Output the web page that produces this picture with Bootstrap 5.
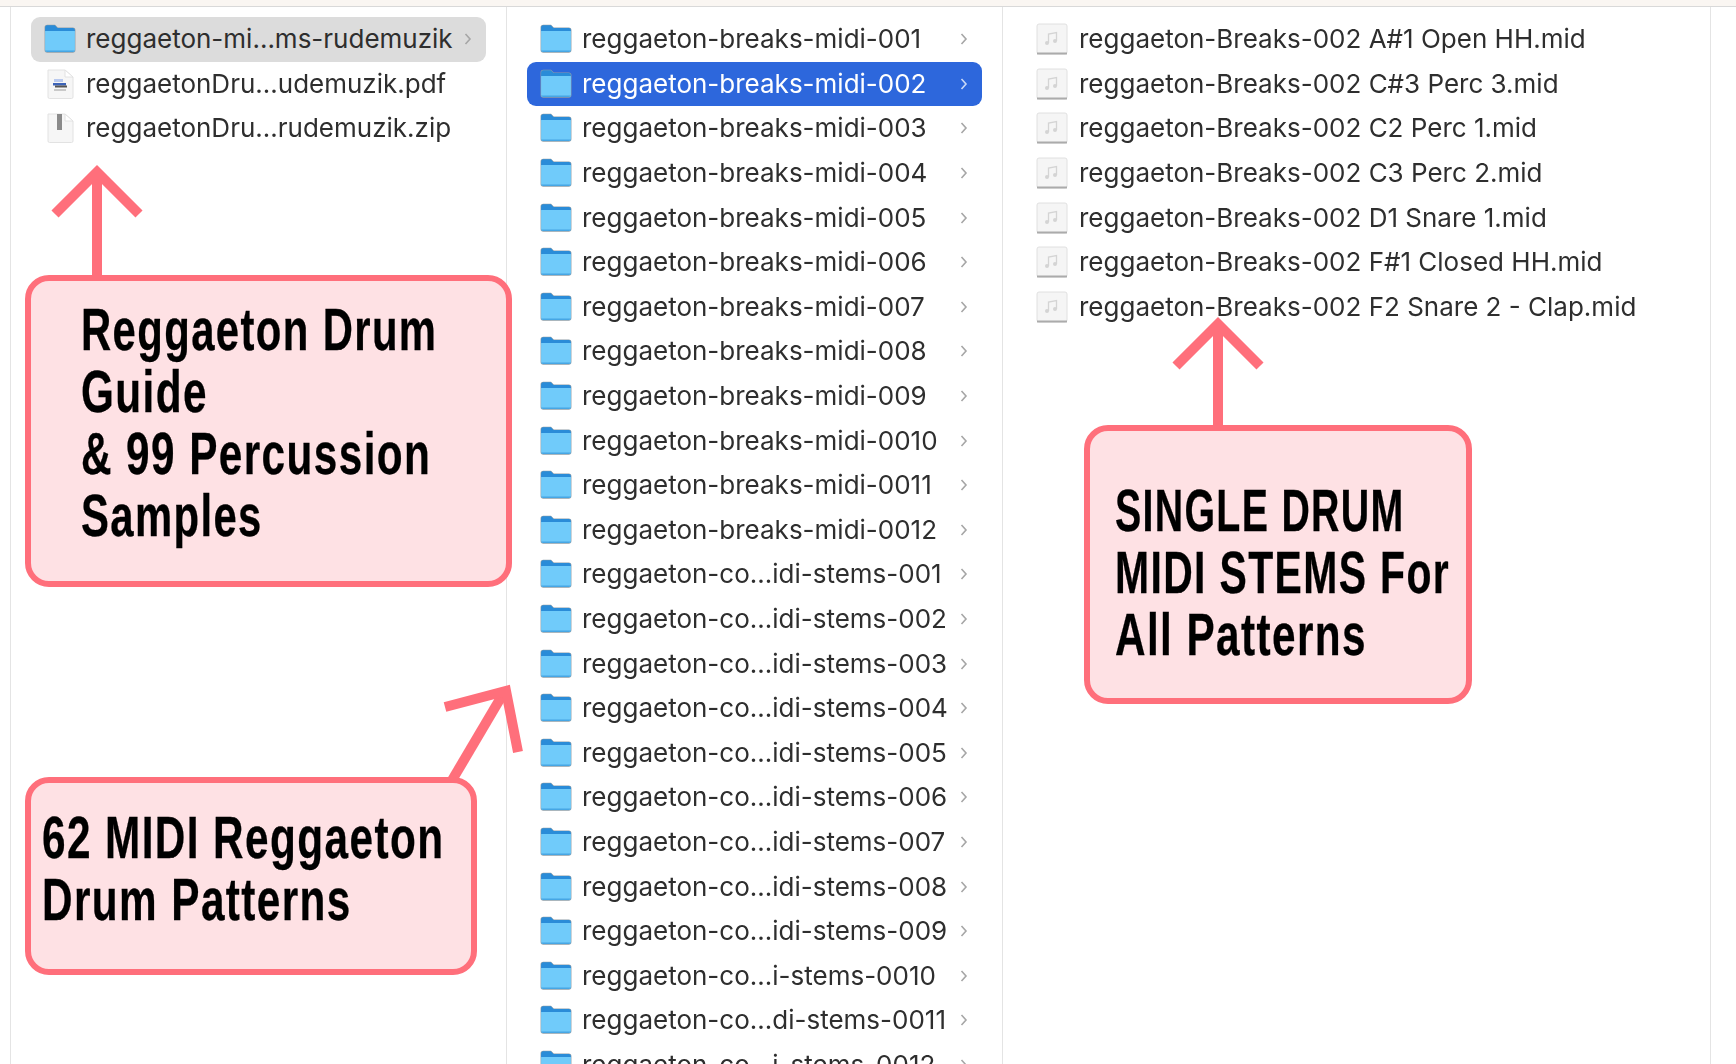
<!DOCTYPE html>
<html lang="en">
<head>
<meta charset="utf-8">
<title>Reggaeton MIDI pack contents</title>
<link href="https://cdn.jsdelivr.net/npm/bootstrap@5.3.0/dist/css/bootstrap.min.css" rel="stylesheet">
<style>
html,body{height:1064px;overflow:hidden;background:#fff}
.topstrip{height:6px;background:#faf6f2;border-bottom:1px solid #d9d9d9;box-sizing:content-box}
.finder{margin-left:10px;width:1701px;height:1057px;overflow:hidden;border-left:1px solid #e4e4e4;border-right:1px solid #e4e4e4;filter:blur(.5px)}
.pane{padding-top:10px;overflow:hidden;height:1057px;flex:none}
.pane-a{width:496px;padding-left:20px;padding-right:20px;border-right:1px solid #e4e4e4}
.pane-b{width:496px;padding-left:20px;padding-right:20px;border-right:1px solid #e4e4e4}
.pane-c{flex:1 1 auto;padding-left:33px}
.fitem{height:44.6px;flex:none;padding-left:13px;padding-right:14px;font:400 26px/1 Inter,"Liberation Sans",sans-serif;color:#2e2e2e;white-space:nowrap;border-radius:9px}
.fitem .ficon{flex:none;width:32px;height:30px;margin-right:10px}
.fitem .chev{flex:none;width:8px;height:14px;margin-left:auto}
.fitem.active-grey{background:#dcdcdc}
.fitem.active-blue{background:#2d67dc;color:#fff}
.pane-c .fitem{padding-left:0;height:44.6px}
.pane-c .fitem .ficon{width:32px;height:32px;margin-right:11px}
.callout{position:absolute;background:#fee1e4;border:6px solid #ff6f7b;border-radius:24px;color:#000;font-family:"Liberation Sans",sans-serif;font-weight:700;font-size:60px;line-height:62px;letter-spacing:2px;white-space:nowrap;-webkit-text-stroke:.3px #000}
.callout span{display:block;transform-origin:left center;transform:scaleX(.705)}
.callout span.narrow-a{transform:scaleX(.697)}
.callout span.narrow-b{transform:scaleX(.682)}
.callout span.narrow-c{transform:scaleX(.655)}
.call-a{left:25px;top:275px;width:487px;height:312px;padding:18px 0 0 50px}
.call-b{left:25px;top:777px;width:452px;height:198px;padding:24px 0 0 11px}
.call-c{left:1084px;top:425px;width:388px;height:279px;padding:49px 0 0 25px}
.arrows{position:absolute;left:0;top:0;pointer-events:none}
</style>
</head>
<body class="position-relative m-0">
<svg width="0" height="0" class="position-absolute">
<defs>
<symbol id="folder" viewBox="1.500 2.500 29 27">
<path d="M2 5.500Q2 3 4.500 3H11.500L14 5.500H27.500Q30 5.500 30 8V26Q30 28.500 27.500 28.500H4.500Q2 28.500 2 26Z" fill="#8f9ea8"/>
<path d="M2.500 6Q2.500 3.500 4.500 3.500H11.300L13.800 6H27.500Q29.500 6 29.500 8V9.500H2.500Z" fill="#2a8cd8"/>
<path d="M2.500 8.800H29.500V25.800Q29.500 27.800 27.500 27.800H4.500Q2.500 27.800 2.500 25.800Z" fill="#70cbfa"/>
<path d="M2.500 26.500H29.500V26.200Q29.500 27.800 27.500 27.800H4.500Q2.500 27.800 2.500 26.200Z" fill="#46a6e4"/>
</symbol>
<symbol id="chevron" viewBox="0 0 8 14"><path d="M1.500 2L6 7L1.500 12" fill="none" stroke="#a6a6a6" stroke-width="1.600"/></symbol>
<symbol id="chevwhite" viewBox="0 0 8 14"><path d="M1.500 2L6 7L1.500 12" fill="none" stroke="#c9d8f6" stroke-width="1.600"/></symbol>
<symbol id="pdfdoc" viewBox="0 0 32 30">
<path d="M4 1H21L29 8V28Q29 29.500 27.500 29.500H5.500Q4 29.500 4 28Z" fill="#f6f6f6" stroke="#e2e2e2"/>
<path d="M21 1V8H29Z" fill="#fff" stroke="#e2e2e2"/>
<rect x="10" y="10" width="9" height="3" fill="#b9c9ee"/><rect x="9" y="14" width="13" height="2.500" fill="#3c63b8"/><rect x="11" y="16.500" width="12" height="2" fill="#555"/><rect x="10" y="20" width="12" height="2" fill="#c9c9c9"/>
</symbol>
<symbol id="zipdoc" viewBox="0 0 32 30">
<path d="M4 1H21L29 8V28Q29 29.500 27.500 29.500H5.500Q4 29.500 4 28Z" fill="#f6f6f6" stroke="#e2e2e2"/>
<path d="M21 1V8H29Z" fill="#fff" stroke="#e2e2e2"/>
<rect x="13" y="1" width="5" height="16" fill="#8a8a8a"/>
</symbol>
<symbol id="midi" viewBox="0 0 32 32">
<rect x="1" y="1" width="30" height="30" rx="2" fill="#f5f5f5" stroke="#e0e0e0"/>
<rect x="1" y="29.500" width="30" height="2" fill="#ababab"/>
<path d="M12.500 20V11L20.500 9.500V18" fill="none" stroke="#d4d4d4" stroke-width="1.300"/>
<circle cx="11" cy="20" r="2" fill="#d4d4d4"/><circle cx="19" cy="18" r="2" fill="#d4d4d4"/>
</symbol>
</defs>
</svg>

<div class="topstrip"></div>
<div class="finder d-flex">
  <div class="pane pane-a d-flex flex-column">
    <div class="fitem active-grey d-flex align-items-center"><svg class="ficon"><use href="#folder"/></svg><span>reggaeton-mi...ms-rudemuzik</span><svg class="chev"><use href="#chevron"/></svg></div>
    <div class="fitem d-flex align-items-center"><svg class="ficon"><use href="#pdfdoc"/></svg><span>reggaetonDru...udemuzik.pdf</span></div>
    <div class="fitem d-flex align-items-center"><svg class="ficon"><use href="#zipdoc"/></svg><span>reggaetonDru...rudemuzik.zip</span></div>
  </div>
  <div class="pane pane-b d-flex flex-column">
    <div class="fitem d-flex align-items-center"><svg class="ficon"><use href="#folder"/></svg><span>reggaeton-breaks-midi-001</span><svg class="chev"><use href="#chevron"/></svg></div>
    <div class="fitem active-blue d-flex align-items-center"><svg class="ficon"><use href="#folder"/></svg><span>reggaeton-breaks-midi-002</span><svg class="chev"><use href="#chevwhite"/></svg></div>
    <div class="fitem d-flex align-items-center"><svg class="ficon"><use href="#folder"/></svg><span>reggaeton-breaks-midi-003</span><svg class="chev"><use href="#chevron"/></svg></div>
    <div class="fitem d-flex align-items-center"><svg class="ficon"><use href="#folder"/></svg><span>reggaeton-breaks-midi-004</span><svg class="chev"><use href="#chevron"/></svg></div>
    <div class="fitem d-flex align-items-center"><svg class="ficon"><use href="#folder"/></svg><span>reggaeton-breaks-midi-005</span><svg class="chev"><use href="#chevron"/></svg></div>
    <div class="fitem d-flex align-items-center"><svg class="ficon"><use href="#folder"/></svg><span>reggaeton-breaks-midi-006</span><svg class="chev"><use href="#chevron"/></svg></div>
    <div class="fitem d-flex align-items-center"><svg class="ficon"><use href="#folder"/></svg><span>reggaeton-breaks-midi-007</span><svg class="chev"><use href="#chevron"/></svg></div>
    <div class="fitem d-flex align-items-center"><svg class="ficon"><use href="#folder"/></svg><span>reggaeton-breaks-midi-008</span><svg class="chev"><use href="#chevron"/></svg></div>
    <div class="fitem d-flex align-items-center"><svg class="ficon"><use href="#folder"/></svg><span>reggaeton-breaks-midi-009</span><svg class="chev"><use href="#chevron"/></svg></div>
    <div class="fitem d-flex align-items-center"><svg class="ficon"><use href="#folder"/></svg><span>reggaeton-breaks-midi-0010</span><svg class="chev"><use href="#chevron"/></svg></div>
    <div class="fitem d-flex align-items-center"><svg class="ficon"><use href="#folder"/></svg><span>reggaeton-breaks-midi-0011</span><svg class="chev"><use href="#chevron"/></svg></div>
    <div class="fitem d-flex align-items-center"><svg class="ficon"><use href="#folder"/></svg><span>reggaeton-breaks-midi-0012</span><svg class="chev"><use href="#chevron"/></svg></div>
    <div class="fitem d-flex align-items-center"><svg class="ficon"><use href="#folder"/></svg><span>reggaeton-co...idi-stems-001</span><svg class="chev"><use href="#chevron"/></svg></div>
    <div class="fitem d-flex align-items-center"><svg class="ficon"><use href="#folder"/></svg><span>reggaeton-co...idi-stems-002</span><svg class="chev"><use href="#chevron"/></svg></div>
    <div class="fitem d-flex align-items-center"><svg class="ficon"><use href="#folder"/></svg><span>reggaeton-co...idi-stems-003</span><svg class="chev"><use href="#chevron"/></svg></div>
    <div class="fitem d-flex align-items-center"><svg class="ficon"><use href="#folder"/></svg><span>reggaeton-co...idi-stems-004</span><svg class="chev"><use href="#chevron"/></svg></div>
    <div class="fitem d-flex align-items-center"><svg class="ficon"><use href="#folder"/></svg><span>reggaeton-co...idi-stems-005</span><svg class="chev"><use href="#chevron"/></svg></div>
    <div class="fitem d-flex align-items-center"><svg class="ficon"><use href="#folder"/></svg><span>reggaeton-co...idi-stems-006</span><svg class="chev"><use href="#chevron"/></svg></div>
    <div class="fitem d-flex align-items-center"><svg class="ficon"><use href="#folder"/></svg><span>reggaeton-co...idi-stems-007</span><svg class="chev"><use href="#chevron"/></svg></div>
    <div class="fitem d-flex align-items-center"><svg class="ficon"><use href="#folder"/></svg><span>reggaeton-co...idi-stems-008</span><svg class="chev"><use href="#chevron"/></svg></div>
    <div class="fitem d-flex align-items-center"><svg class="ficon"><use href="#folder"/></svg><span>reggaeton-co...idi-stems-009</span><svg class="chev"><use href="#chevron"/></svg></div>
    <div class="fitem d-flex align-items-center"><svg class="ficon"><use href="#folder"/></svg><span>reggaeton-co...i-stems-0010</span><svg class="chev"><use href="#chevron"/></svg></div>
    <div class="fitem d-flex align-items-center"><svg class="ficon"><use href="#folder"/></svg><span>reggaeton-co...di-stems-0011</span><svg class="chev"><use href="#chevron"/></svg></div>
    <div class="fitem d-flex align-items-center"><svg class="ficon"><use href="#folder"/></svg><span>reggaeton-co...i-stems-0012</span><svg class="chev"><use href="#chevron"/></svg></div>
  </div>
  <div class="pane pane-c d-flex flex-column">
    <div class="fitem d-flex align-items-center"><svg class="ficon"><use href="#midi"/></svg><span>reggaeton-Breaks-002 A#1 Open HH.mid</span></div>
    <div class="fitem d-flex align-items-center"><svg class="ficon"><use href="#midi"/></svg><span>reggaeton-Breaks-002 C#3 Perc 3.mid</span></div>
    <div class="fitem d-flex align-items-center"><svg class="ficon"><use href="#midi"/></svg><span>reggaeton-Breaks-002 C2 Perc 1.mid</span></div>
    <div class="fitem d-flex align-items-center"><svg class="ficon"><use href="#midi"/></svg><span>reggaeton-Breaks-002 C3 Perc 2.mid</span></div>
    <div class="fitem d-flex align-items-center"><svg class="ficon"><use href="#midi"/></svg><span>reggaeton-Breaks-002 D1 Snare 1.mid</span></div>
    <div class="fitem d-flex align-items-center"><svg class="ficon"><use href="#midi"/></svg><span>reggaeton-Breaks-002 F#1 Closed HH.mid</span></div>
    <div class="fitem d-flex align-items-center"><svg class="ficon"><use href="#midi"/></svg><span>reggaeton-Breaks-002 F2 Snare 2 - Clap.mid</span></div>
  </div>
</div>

<svg class="arrows" width="1736" height="1064" viewBox="0 0 1736 1064" fill="none" stroke="#ff6f7b" stroke-width="10">
  <path d="M97 278V170"/><path d="M55 214L97 172L139 214"/>
  <path d="M1218 428V323"/><path d="M1176 366L1218 324L1260 366"/>
  <path d="M451 782L503 694"/><path d="M445 707L506 691L518 752"/>
</svg>

<div class="callout call-a"><span class="narrow-a">Reggaeton Drum</span><span>Guide</span><span>&amp; 99 Percussion</span><span class="narrow-a">Samples</span></div>
<div class="callout call-b"><span>62 MIDI Reggaeton</span><span>Drum Patterns</span></div>
<div class="callout call-c"><span class="narrow-c">SINGLE DRUM</span><span class="narrow-b">MIDI STEMS For</span><span>All Patterns</span></div>
</body>
</html>
